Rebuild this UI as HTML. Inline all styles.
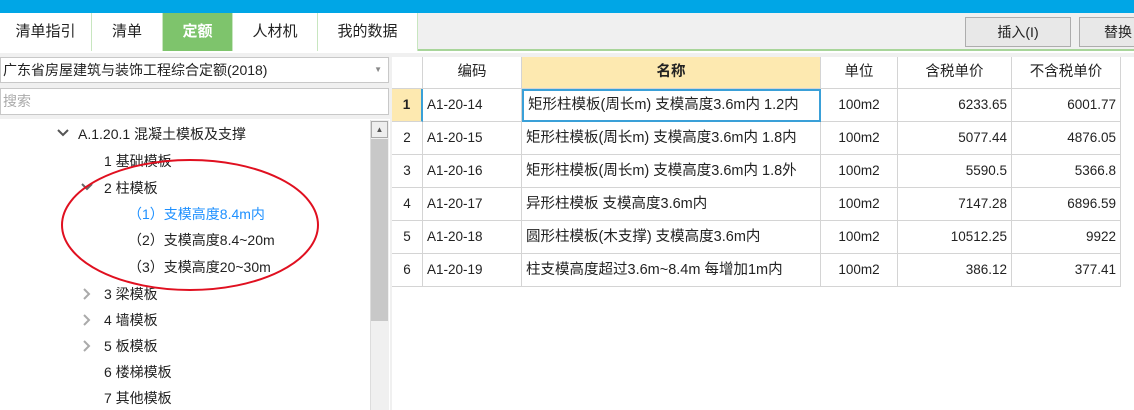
<!DOCTYPE html>
<html><head><meta charset="utf-8"><style>
*{margin:0;padding:0;box-sizing:border-box}
body{width:1134px;height:410px;overflow:hidden;background:#fff;font-family:"Liberation Sans","Noto Sans CJK SC",sans-serif;font-size:14px;color:#222;position:relative}
.a{position:absolute;white-space:nowrap}
.tab{position:absolute;top:13px;height:38px;line-height:38px;text-align:center;font-size:15px;border-right:1px solid #c8e6c0;background:#fff}
.cell{position:absolute;height:33px;line-height:32px;border-right:1px solid #d4d4d4;border-bottom:1px solid #d4d4d4;font-size:13.5px;overflow:hidden}
.tr{font-size:14px}
.ch{position:absolute}
</style></head><body>
<div class="a" style="left:0;top:0;width:1134px;height:13px;background:#00a6e6"></div>
<div class="a" style="left:0;top:13px;width:1134px;height:38px;background:#f0f0f0;border-bottom:2px solid #a8d59a"></div>
<div class="tab" style="left:0;width:92px">清单指引</div>
<div class="tab" style="left:92px;width:71px">清单</div>
<div class="tab" style="left:163px;width:70px;background:#7ec46c;color:#fff;font-weight:bold">定额</div>
<div class="tab" style="left:233px;width:85px">人材机</div>
<div class="tab" style="left:318px;width:100px">我的数据</div>
<div class="a" style="left:965px;top:17px;width:106px;height:30px;border:1px solid #adadad;background:#e8e8e8;text-align:center;line-height:28px;font-size:14px">插入(I)</div>
<div class="a" style="left:1079px;top:17px;width:70px;height:30px;border:1px solid #adadad;background:#e8e8e8;line-height:28px;font-size:14px;padding-left:24px">替换</div>
<div class="a" style="left:0;top:53px;width:1134px;height:357px;background:#f0f0f0"></div>
<!-- left -->
<div class="a" style="left:0;top:57px;width:389px;height:26px;background:#fff;border:1px solid #c8c8c8;line-height:24px;font-size:14px;padding-left:2px">广东省房屋建筑与装饰工程综合定额(2018)<span style="position:absolute;right:6px;top:0;font-size:8px;color:#888">▼</span></div>
<div class="a" style="left:0;top:88px;width:389px;height:27px;background:#fff;border:1px solid #c8c8c8;line-height:25px;font-size:14px;color:#aaa;padding-left:2px">搜索</div>
<div class="a" style="left:0;top:119px;width:390px;height:291px;background:#fff"></div>
<div class="a" style="left:370px;top:120px;width:19px;height:290px;background:#f0f0f0;border-left:1px solid #ddd"></div>
<div class="a" style="left:371px;top:121px;width:17px;height:17px;border:1px solid #aaa;background:#eee;font-size:8px;text-align:center;line-height:15px;color:#555">▲</div>
<div class="a" style="left:371px;top:139px;width:17px;height:182px;background:#c8c8c8"></div>
<svg class="ch" style="left:56px;top:128px" width="14" height="10"><path d="M2 2 L7 7 L12 2" fill="none" stroke="#555" stroke-width="2"/></svg>
<div class="a tr" style="left:78px;top:124px">A.1.20.1 混凝土模板及支撑</div>
<div class="a tr" style="left:104px;top:151px">1 基础模板</div>
<svg class="ch" style="left:80px;top:182px" width="14" height="10"><path d="M2 2 L7 7 L12 2" fill="none" stroke="#666" stroke-width="2"/></svg>
<div class="a tr" style="left:104px;top:178px">2 柱模板</div>
<div class="a tr" style="left:128px;top:204px;color:#1e90ff">（1）支模高度8.4m内</div>
<div class="a tr" style="left:128px;top:230px">（2）支模高度8.4~20m</div>
<div class="a tr" style="left:128px;top:257px">（3）支模高度20~30m</div>
<svg class="ch" style="left:82px;top:287px" width="10" height="14"><path d="M2 2 L7 7 L2 12" fill="none" stroke="#aaa" stroke-width="2"/></svg><div class="a tr" style="left:104px;top:284px">3 梁模板</div>
<svg class="ch" style="left:82px;top:313px" width="10" height="14"><path d="M2 2 L7 7 L2 12" fill="none" stroke="#aaa" stroke-width="2"/></svg><div class="a tr" style="left:104px;top:310px">4 墙模板</div>
<svg class="ch" style="left:82px;top:339px" width="10" height="14"><path d="M2 2 L7 7 L2 12" fill="none" stroke="#aaa" stroke-width="2"/></svg><div class="a tr" style="left:104px;top:336px">5 板模板</div>
<div class="a tr" style="left:104px;top:362px">6 楼梯模板</div>
<div class="a tr" style="left:104px;top:388px">7 其他模板</div>
<svg class="a" style="left:0;top:0" width="400" height="410"><ellipse cx="190" cy="225" rx="128" ry="65" fill="none" stroke="#e01020" stroke-width="2"/></svg>
<!-- grid -->
<div class="a" style="left:392px;top:57px;width:742px;height:353px;background:#fff"></div>
<div id="g"></div>
<script>
var cols=[[392,31],[423,99],[522,299],[821,77],[898,114],[1012,109]];
var rows=[["","编码","名称","单位","含税单价","不含税单价"],
["1","A1-20-14","矩形柱模板(周长m) 支模高度3.6m内 1.2内","100m2","6233.65","6001.77"],
["2","A1-20-15","矩形柱模板(周长m) 支模高度3.6m内 1.8内","100m2","5077.44","4876.05"],
["3","A1-20-16","矩形柱模板(周长m) 支模高度3.6m内 1.8外","100m2","5590.5","5366.8"],
["4","A1-20-17","异形柱模板 支模高度3.6m内","100m2","7147.28","6896.59"],
["5","A1-20-18","圆形柱模板(木支撑) 支模高度3.6m内","100m2","10512.25","9922"],
["6","A1-20-19","柱支模高度超过3.6m~8.4m 每增加1m内","100m2","386.12","377.41"]];
var h="";
for(var r=0;r<7;r++){var y=r==0?57:89+(r-1)*33;var hh=r==0?32:33;
for(var c=0;c<6;c++){var s="left:"+cols[c][0]+"px;top:"+y+"px;width:"+cols[c][1]+"px;height:"+hh+"px;";
var al=r==0||c==0||c==3?"center":(c>=4?"right":"left");s+="text-align:"+al+";padding:0 4px;";
if(r==0){s+="font-size:14.5px;line-height:31px;";if(c==2)s+="background:#fde9b0;font-weight:bold;";}
if(c==2&&r>0)s+="font-size:14.5px;";
if(r==1&&c==0)s+="background:#fde9b0;font-weight:bold;border-right:2px solid #3aa0d8;";
if(r==1&&c==2)s+="border:2px solid #3aa0d8;line-height:29px;";
h+='<div class="cell" style="'+s+'">'+rows[r][c]+'</div>';}}
document.getElementById("g").innerHTML=h;
</script>
</body></html>
